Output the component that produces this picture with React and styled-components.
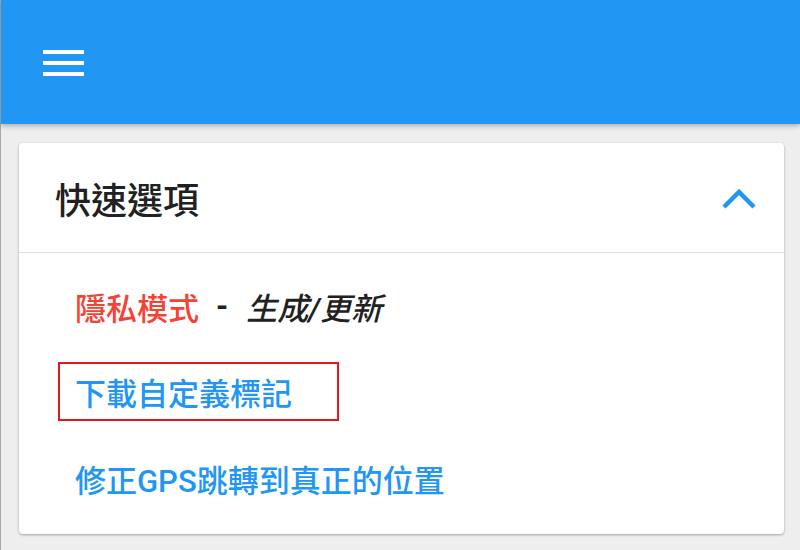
import React from 'react'
import styled, { createGlobalStyle } from 'styled-components'

const Global = createGlobalStyle`
  html, body {
    margin: 0;
    padding: 0;
    background: #eeeeee;
    font-family: Roboto, "Noto Sans CJK TC", "Noto Sans", sans-serif;
  }
  #root {
    min-height: 550px;
    border-left: 1px solid #a8a8a8;
    box-sizing: border-box;
  }
`;

const AppBar = styled.div`
  height: 124px;
  background-color: #2196f3;
  display: flex;
  align-items: center;
  padding-left: 42px;
  box-shadow: 0 2px 5px rgba(0, 0, 0, 0.28);
  position: relative;
  z-index: 1;
`;

const MenuButton = styled.div`
  width: 41px;
  display: flex;
  flex-direction: column;
  gap: 7px;
  margin-top: 1px;
`;

const MenuLine = styled.span`
  display: block;
  height: 4px;
  background: #ffffff;
`;

const Page = styled.div`
  padding: 19px 16px 16px 18px;
`;

const Card = styled.div`
  background: #ffffff;
  border-radius: 4px;
  box-shadow: 0 1px 3px rgba(0, 0, 0, 0.22), 0 1px 2px rgba(0, 0, 0, 0.12);
`;

const CardHeader = styled.div`
  height: 109px;
  display: flex;
  align-items: center;
  justify-content: space-between;
  padding: 0 28px 0 36px;
  border-bottom: 1px solid #e0e0e0;
`;

const Title = styled.div`
  font-size: 36px;
  font-weight: 500;
  color: #212121;
  margin-top: 1px;
`;

const Chevron = styled.svg`
  width: 34px;
  height: 22px;
  margin-top: 2px;
`;

const CardBody = styled.div`
  display: flex;
  flex-direction: column;
  padding: 10px 0 13px 56px;
`;

const Row = styled.div`
  height: 86px;
  display: flex;
  align-items: center;
  font-size: 31px;
  font-weight: 500;
  white-space: nowrap;
`;

const Red = styled.span`
  color: #f44336;
`;

const Dash = styled.span`
  color: #212121;
  font-weight: 700;
  margin: 0 18px 0 17px;
`;

const Italic = styled.span`
  color: #212121;
  font-style: italic;
  font-weight: 500;
`;

const Link = styled.span`
  color: #2196f3;
  ${p => p.$marked && `
    border: 2px solid #e5161f;
    height: 55px;
    width: 262px;
    display: flex;
    align-items: center;
    padding-left: 15px;
    margin: -2px 0 0 -17px;
  `}
`;

export default function App() {
  return (
    <>
      <Global />
      <AppBar>
        <MenuButton>
          <MenuLine />
          <MenuLine />
          <MenuLine />
        </MenuButton>
      </AppBar>
      <Page>
        <Card>
          <CardHeader>
            <Title>快速選項</Title>
            <Chevron viewBox="0 0 34 22">
              <polyline points="2,19 17,4 32,19" fill="none" stroke="#2196f3" strokeWidth="4.5" />
            </Chevron>
          </CardHeader>
          <CardBody>
            <Row>
              <Red>隱私模式</Red>
              <Dash>-</Dash>
              <Italic>生成/更新</Italic>
            </Row>
            <Row>
              <Link $marked>下載自定義標記</Link>
            </Row>
            <Row>
              <Link>修正GPS跳轉到真正的位置</Link>
            </Row>
          </CardBody>
        </Card>
      </Page>
    </>
  );
}
